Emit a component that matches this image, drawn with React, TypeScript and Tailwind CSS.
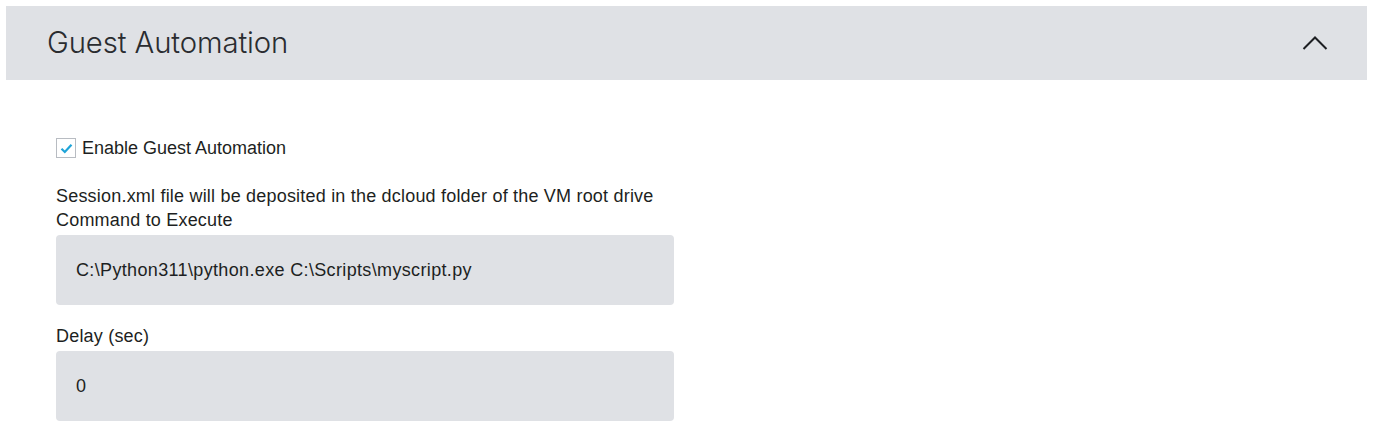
import { useState } from "react";

const GuestAutomation = () => {
  const [enabled, setEnabled] = useState(true);
  const [command, setCommand] = useState("C:\\Python311\\python.exe C:\\Scripts\\myscript.py");
  const [delay, setDelay] = useState("0");

  return (
    <div className="min-h-[446px] bg-white pl-[6px] pr-[17px] pt-[6px] font-['Liberation_Sans',Arial,sans-serif] text-[#1d1f22]">
      {/* header */}
      <div className="flex h-[74px] items-center justify-between bg-[#dfe1e5] pl-[41px] pr-[39px]">
        <h2 className="font-['Inter',sans-serif] text-[29.3px] font-light tracking-[-0.1px] text-[#2a2c30]">
          Guest Automation
        </h2>
        <svg width="26" height="16" viewBox="0 0 26 16" fill="none">
          <path d="M1.5 14L13 2.5L24.5 14" stroke="#1d1f22" strokeWidth="2" />
        </svg>
      </div>

      {/* body */}
      <div className="pl-[50px] pt-[57px] text-[18px] tracking-[0.2px]">
        <label className="flex items-center gap-[6px] leading-[22px] tracking-normal">
          <span
            onClick={() => setEnabled(!enabled)}
            className="flex h-[20px] w-[20px] items-center justify-center border border-[#b8bcc2] bg-white"
          >
            {enabled && (
              <svg width="13" height="11" viewBox="0 0 13 11" fill="none">
                <path d="M1.5 5.8L4.8 9L11.5 1.8" stroke="#1ea4d8" strokeWidth="2.2" />
              </svg>
            )}
          </span>
          Enable Guest Automation
        </label>

        <p className="mt-[25px] leading-[24px]">
          Session.xml file will be deposited in the dcloud folder of the VM root drive
        </p>
        <p className="leading-[24px]">Command to Execute</p>
        <input
          value={command}
          onChange={(e) => setCommand(e.target.value)}
          className="mt-[3px] h-[70px] w-[618px] rounded-[4px] bg-[#dfe1e5] px-[20px] tracking-[0.35px] text-[#1d1f22] outline-none"
        />

        <p className="mt-[19px] leading-[24px]">Delay (sec)</p>
        <input
          value={delay}
          onChange={(e) => setDelay(e.target.value)}
          className="mt-[3px] h-[70px] w-[618px] rounded-[4px] bg-[#dfe1e5] px-[20px] text-[#1d1f22] outline-none"
        />
      </div>
    </div>
  );
};

export default GuestAutomation;
